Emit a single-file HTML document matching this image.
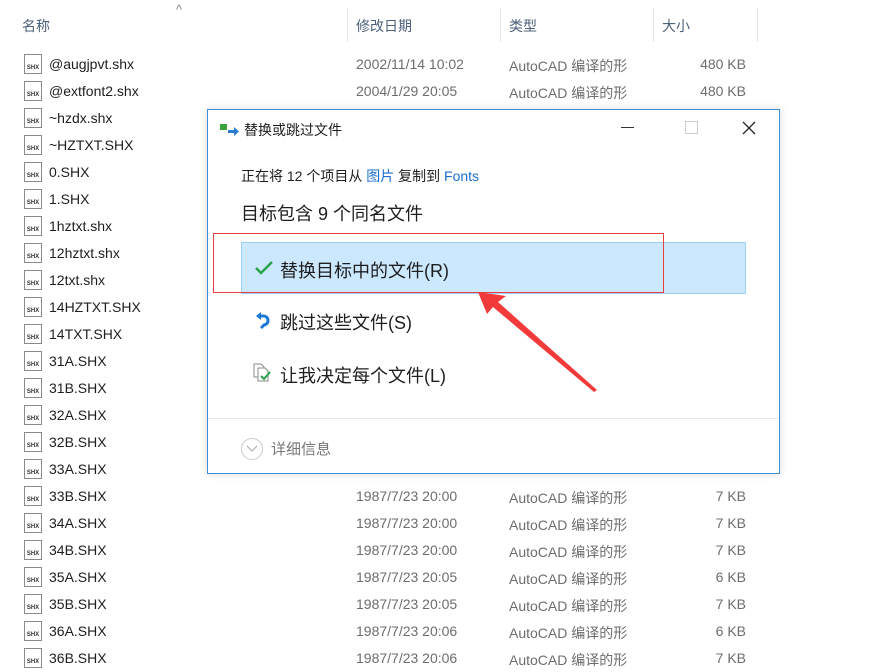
<!DOCTYPE html>
<html><head><meta charset="utf-8"><style>
body{margin:0;width:880px;height:667px;overflow:hidden;background:#fff;font-family:"Liberation Sans","Noto Sans CJK SC",sans-serif;position:relative;color:#1e1e1e}
.a{position:absolute;white-space:nowrap}
.h{color:#4c607a;font-size:14px;top:16px}
.sep{position:absolute;top:8px;width:1px;height:34px;background:#e5e5e5}
.r{position:absolute;left:0;width:880px;height:27px;font-size:14px}
.r .n{position:absolute;left:49px;top:5px;color:#1e1e1e}
.r .d{position:absolute;left:356px;top:5px;color:#6d6d6d}
.r .t{position:absolute;left:509px;top:5px;color:#6d6d6d}
.r .s{position:absolute;right:134px;top:5px;color:#6d6d6d}
.ic{position:absolute;left:24px;top:3px;width:18px;height:20px;border:1px solid #8a8a8a;box-sizing:border-box;background:#fff;font-size:6px;font-weight:bold;color:#333;line-height:26px;text-align:center;overflow:hidden}
.dlg{position:absolute;left:207px;top:109px;width:571px;height:363px;border:1px solid #3c8fd6;background:#fff;box-shadow:0 0 8px rgba(0,0,0,.15)}
</style></head><body>
<div class="a" style="left:176px;top:2px;color:#888;font-size:13px">^</div>
<div class="a h" style="left:22px">名称</div>
<div class="sep" style="left:347px"></div><div class="a h" style="left:356px">修改日期</div>
<div class="sep" style="left:500px"></div><div class="a h" style="left:509px">类型</div>
<div class="sep" style="left:653px"></div><div class="a h" style="left:662px">大小</div>
<div class="sep" style="left:757px"></div>
<div id="rows"></div>
<script>
var names=["@augjpvt.shx","@extfont2.shx","~hzdx.shx","~HZTXT.SHX","0.SHX","1.SHX","1hztxt.shx","12hztxt.shx","12txt.shx","14HZTXT.SHX","14TXT.SHX","31A.SHX","31B.SHX","32A.SHX","32B.SHX","33A.SHX","33B.SHX","34A.SHX","34B.SHX","35A.SHX","35B.SHX","36A.SHX","36B.SHX"];
var info={0:["2002/11/14 10:02","480 KB"],1:["2004/1/29 20:05","480 KB"],16:["1987/7/23 20:00","7 KB"],17:["1987/7/23 20:00","7 KB"],18:["1987/7/23 20:00","7 KB"],19:["1987/7/23 20:05","6 KB"],20:["1987/7/23 20:05","7 KB"],21:["1987/7/23 20:06","6 KB"],22:["1987/7/23 20:06","7 KB"]};
var h="";names.forEach(function(n,i){var y=51+i*27;h+='<div class="r" style="top:'+y+'px"><div class="ic">SHX</div><span class="n">'+n+'</span>';if(info[i])h+='<span class="d">'+info[i][0]+'</span><span class="t">AutoCAD 编译的形</span><span class="s">'+info[i][1]+'</span>';h+='</div>';});
document.getElementById("rows").innerHTML=h;
</script>
<div class="dlg">
<svg class="a" style="left:11px;top:12px" width="22" height="14"><rect x="1" y="2" width="7" height="6" fill="#3ca33c"/><path d="M9 8h6v-3l5 4.5-5 4.5v-3h-6z" fill="#2b7bd6"/></svg>
<div class="a" style="left:36px;top:10px;font-size:14px">替换或跳过文件</div>
<div class="a" style="left:413px;top:17px;width:13px;height:1px;background:#333"></div>
<div class="a" style="left:477px;top:11px;width:11px;height:11px;border:1px solid #ccc"></div>
<svg class="a" style="left:534px;top:11px" width="14" height="14"><path d="M1 1L13 13M13 1L1 13" stroke="#222" stroke-width="1.3"/></svg>
<div class="a" style="left:33px;top:56px;font-size:14px">正在将 12 个项目从 <span style="color:#1a6fd0">图片</span> 复制到 <span style="color:#1a6fd0">Fonts</span></div>
<div class="a" style="left:33px;top:90px;font-size:18px">目标包含 9 个同名文件</div>
<div class="a" style="left:33px;top:132px;width:503px;height:50px;background:#cce8ff;border:1px solid #99d1ff"></div>
<svg class="a" style="left:47px;top:151px" width="18" height="14"><path d="M1 7l5 5L17 1" stroke="#2aa34a" stroke-width="2.5" fill="none"/></svg>
<div class="a" style="left:72px;top:147px;font-size:18px">替换目标中的文件(R)</div>
<svg class="a" style="left:46px;top:202px" width="18" height="18"><path d="M4 4h5a4.5 4.5 0 0 1 1 9l-3 3" stroke="#1a78d6" stroke-width="3" fill="none"/><path d="M2 4l5-4v8z" fill="#1a78d6"/></svg>
<div class="a" style="left:72px;top:199px;font-size:18px">跳过这些文件(S)</div>
<svg class="a" style="left:45px;top:253px" width="20" height="20"><path d="M1 1h7l3 3v10H1z" fill="#fff" stroke="#888"/><path d="M5 5h7l3 3v10H5z" fill="#fff" stroke="#888"/><path d="M8 13l3 3 6-7" stroke="#2aa34a" stroke-width="2" fill="none"/></svg>
<div class="a" style="left:72px;top:252px;font-size:18px">让我决定每个文件(L)</div>
<div class="a" style="left:0;top:308px;width:571px;height:1px;background:#e8e8e8"></div>
<div class="a" style="left:33px;top:328px;width:20px;height:20px;border:1px solid #ccc;border-radius:50%"></div>
<svg class="a" style="left:38px;top:335px" width="12" height="8"><path d="M1 1l5 5 5-5" stroke="#aaa" fill="none"/></svg>
<div class="a" style="left:63px;top:328px;font-size:15px;color:#777">详细信息</div>
</div>
<div class="a" style="left:213px;top:233px;width:449px;height:58px;border:1px solid #e84040"></div>
<svg class="a" style="left:0;top:0" width="880" height="667"><polygon points="478,292 506,296 498,302 597,390 594,392 493,307 487,314" fill="#f23a3a"/></svg>
</body></html>
